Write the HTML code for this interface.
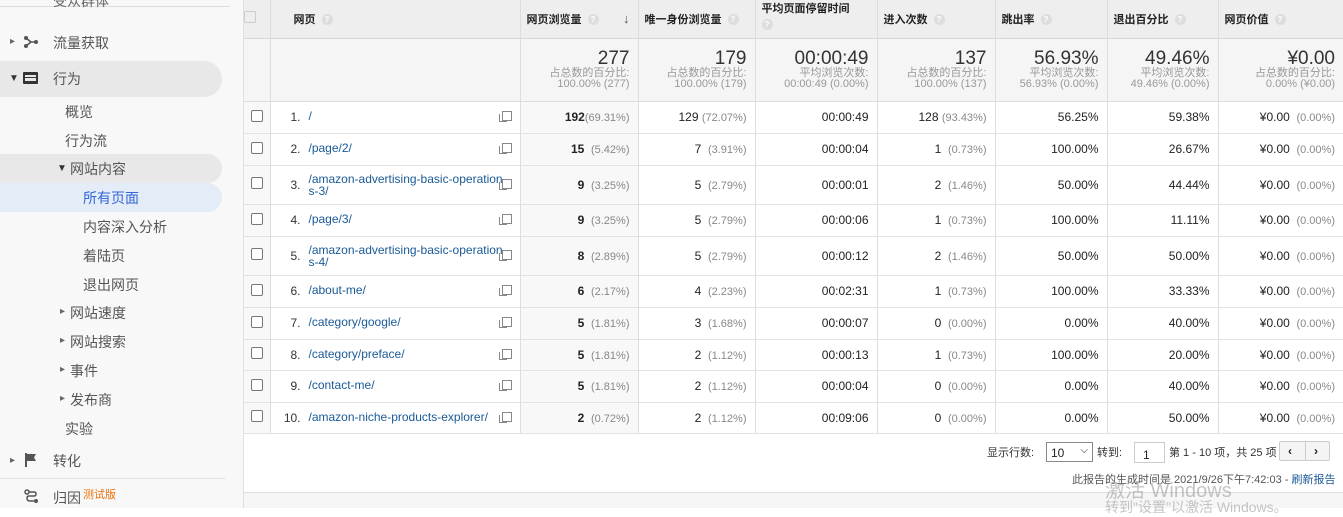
<!DOCTYPE html>
<html><head><meta charset="utf-8">
<style>
*{margin:0;padding:0;box-sizing:border-box}
body{width:1343px;height:508px;overflow:hidden;background:#fff;font-family:"Liberation Sans","Noto Sans CJK SC",sans-serif;font-size:12px;color:#222;position:relative}
#side{position:absolute;left:0;top:0;width:244px;height:508px;background:#f8f8f8;color:#444}
.it{position:absolute;font-size:14px;color:#555}
.ar{position:absolute;font-size:10px;color:#666}
.pill{position:absolute;background:#e8e8e8;border-radius:0 20px 20px 0}
table{position:absolute;left:244px;top:0;width:1099px;border-collapse:collapse;table-layout:fixed}
td{border-right:1px solid #ddd;border-bottom:1px solid #e2e2e2;padding:0 8px;text-align:right;vertical-align:middle;white-space:nowrap}
td:last-child{border-right:none}
tr.h td{background:#eee;height:38px;font-weight:bold;font-size:11px;text-align:left;color:#222;border-bottom:1px solid #d6d6d6;vertical-align:middle}
tr.t td{background:#f5f5f5;height:63px;color:#999;font-size:11px;line-height:11px;border-bottom:1px solid #ddd}
tr.t b{display:block;font-weight:normal;font-size:19px;line-height:19px;color:#333}
td.c{background:#f8f8f8;padding:0;text-align:center}
td.s{background:#f8f8f8}
.cb{display:inline-block;width:12px;height:12px;border:1px solid #777;border-radius:2px;background:#fff}
td.p{text-align:left;padding:0 8px 0 0;position:relative;white-space:normal}
.n{display:inline-block;width:38px;text-align:right;padding-right:8px;color:#333;vertical-align:top}
.l{color:#1a5a96;display:inline-block;width:196px;vertical-align:top;line-height:12px;word-break:break-all}
.ic{position:absolute;right:8px;top:50%;margin-top:-6px;width:10px;height:10px;border:1px solid #888;background:#fff}
.ic:before{content:"";position:absolute;left:-4px;top:2px;width:7px;height:7px;border-left:1px solid #888;border-bottom:1px solid #888}
.g{color:#888;font-size:11px}
.q{display:inline-block;width:11px;height:11px;border-radius:50%;background:#ddd;color:#fff;font-size:8px;text-align:center;line-height:11px;margin-left:6px;vertical-align:middle}
</style></head><body>
<div id="side">
<div style="position:absolute;left:0;top:0;width:230px;height:7px;border-bottom:1px solid #ddd"></div>
<div class="it" style="left:53px;top:-9px;color:#666">受众群体</div>
<div class="ar" style="left:10px;top:36px">▸</div>
<svg style="position:absolute;left:24px;top:35px" width="14" height="14"><circle cx="2" cy="3" r="2" fill="#555"/><circle cx="2" cy="11" r="2" fill="#555"/><circle cx="12" cy="7" r="2" fill="#555"/><path d="M2 3 L7 7 L2 11 M7 7 H12" stroke="#555" stroke-width="1.6" fill="none"/></svg>
<div class="it" style="left:53px;top:33px">流量获取</div>
<div class="pill" style="left:0;top:61px;width:222px;height:36px"></div>
<div class="ar" style="left:9px;top:73px;color:#333">▼</div>
<div style="position:absolute;left:23px;top:72px;width:15px;height:12px;background:#333;border-radius:1px"><div style="position:absolute;left:2px;top:3px;width:11px;height:6px;background:#e8e8e8"></div><div style="position:absolute;left:2px;top:5px;width:11px;height:1px;background:#333"></div></div>
<div class="it" style="left:53px;top:69px">行为</div>
<div class="it" style="left:65px;top:102px">概览</div>
<div class="it" style="left:65px;top:131px">行为流</div>
<div class="pill" style="left:0;top:154px;width:222px;height:29px"></div>
<div class="ar" style="left:57px;top:163px;color:#333">▼</div>
<div class="it" style="left:70px;top:159px">网站内容</div>
<div class="pill" style="left:0;top:183px;width:222px;height:29px;background:#e4ecf8"></div>
<div class="it" style="left:83px;top:188px;color:#3367d6">所有页面</div>
<div class="it" style="left:83px;top:217px">内容深入分析</div>
<div class="it" style="left:83px;top:246px">着陆页</div>
<div class="it" style="left:83px;top:275px">退出网页</div>
<div class="ar" style="left:60px;top:306px">▸</div><div class="it" style="left:70px;top:303px">网站速度</div>
<div class="ar" style="left:60px;top:335px">▸</div><div class="it" style="left:70px;top:332px">网站搜索</div>
<div class="ar" style="left:60px;top:364px">▸</div><div class="it" style="left:70px;top:361px">事件</div>
<div class="ar" style="left:60px;top:393px">▸</div><div class="it" style="left:70px;top:390px">发布商</div>
<div class="it" style="left:65px;top:419px">实验</div>
<div class="ar" style="left:10px;top:455px">▸</div>
<svg style="position:absolute;left:25px;top:453px" width="12" height="14"><path d="M1 0 V14" stroke="#555" stroke-width="2"/><path d="M2 1 H11 L9 4.5 L11 8 H2Z" fill="#555"/></svg>
<div class="it" style="left:53px;top:451px">转化</div>
<div style="position:absolute;left:0;top:478px;width:225px;height:1px;background:#e0e0e0"></div>
<svg style="position:absolute;left:24px;top:489px" width="16" height="16"><circle cx="3" cy="3" r="2" fill="none" stroke="#555" stroke-width="1.5"/><circle cx="12" cy="12" r="2" fill="#555"/><path d="M5 3 H10 Q12 3 12 5 Q12 7 10 7 H5 Q3 7 3 9 Q3 12 6 12 H10" stroke="#555" stroke-width="1.5" fill="none"/></svg>
<div class="it" style="left:53px;top:488px">归因</div>
<div class="it" style="left:83px;top:486px;font-size:11px;color:#e8710a">测试版</div>
</div>
<div style="position:absolute;left:243px;top:0;width:1px;height:508px;background:#e0e0e0"></div>

<table>
<colgroup><col style="width:26px"><col style="width:250px"><col style="width:118px"><col style="width:117px"><col style="width:122px"><col style="width:118px"><col style="width:112px"><col style="width:111px"><col style="width:125px"></colgroup>
<tr class="h"><td class="c" style="background:#eee"><span class="cb" style="border-color:#ccc;background:#eee"></span></td><td style="padding-left:23px">网页<span class="q">?</span></td><td style="padding-left:6px">网页浏览量<span class="q">?</span><span style="float:right;font-size:13px;color:#555">↓</span></td><td style="padding-left:6px">唯一身份浏览量<span class="q">?</span></td><td style="padding-left:6px;vertical-align:top;padding-top:2px;line-height:15px">平均页面停留时间<br><span class="q" style="margin-left:0">?</span></td><td style="padding-left:6px">进入次数<span class="q">?</span></td><td style="padding-left:6px">跳出率<span class="q">?</span></td><td style="padding-left:6px">退出百分比<span class="q">?</span></td><td style="padding-left:6px">网页价值<span class="q">?</span></td></tr>
<tr class="t"><td class="c" style="background:#f5f5f5"></td><td></td><td><b>277</b>占总数的百分比:<br>100.00% (277)</td><td><b>179</b>占总数的百分比:<br>100.00% (179)</td><td><b>00:00:49</b>平均浏览次数:<br>00:00:49 (0.00%)</td><td><b>137</b>占总数的百分比:<br>100.00% (137)</td><td><b>56.93%</b>平均浏览次数:<br>56.93% (0.00%)</td><td><b>49.46%</b>平均浏览次数:<br>49.46% (0.00%)</td><td><b>¥0.00</b>占总数的百分比:<br>0.00% (¥0.00)</td></tr>
<tr style="height:32px"><td class="c"><span class="cb"></span></td><td class="p"><span class="n">1.</span><span class="l">/</span><i class="ic"></i></td><td class="s"><b>192</b><span class="g">(69.31%)</span></td><td>129 <span class="g">(72.07%)</span></td><td>00:00:49</td><td>128 <span class="g">(93.43%)</span></td><td>56.25%</td><td>59.38%</td><td>¥0.00 &nbsp;<span class="g">(0.00%)</span></td></tr>
<tr style="height:32px"><td class="c"><span class="cb"></span></td><td class="p"><span class="n">2.</span><span class="l">/page/2/</span><i class="ic"></i></td><td class="s"><b>15</b> &nbsp;<span class="g">(5.42%)</span></td><td>7 &nbsp;<span class="g">(3.91%)</span></td><td>00:00:04</td><td>1 &nbsp;<span class="g">(0.73%)</span></td><td>100.00%</td><td>26.67%</td><td>¥0.00 &nbsp;<span class="g">(0.00%)</span></td></tr>
<tr style="height:39px"><td class="c"><span class="cb"></span></td><td class="p"><span class="n" style="vertical-align:middle">3.</span><span class="l" style="vertical-align:middle">/amazon-advertising-basic-operations-3/</span><i class="ic"></i></td><td class="s"><b>9</b> &nbsp;<span class="g">(3.25%)</span></td><td>5 &nbsp;<span class="g">(2.79%)</span></td><td>00:00:01</td><td>2 &nbsp;<span class="g">(1.46%)</span></td><td>50.00%</td><td>44.44%</td><td>¥0.00 &nbsp;<span class="g">(0.00%)</span></td></tr>
<tr style="height:32px"><td class="c"><span class="cb"></span></td><td class="p"><span class="n">4.</span><span class="l">/page/3/</span><i class="ic"></i></td><td class="s"><b>9</b> &nbsp;<span class="g">(3.25%)</span></td><td>5 &nbsp;<span class="g">(2.79%)</span></td><td>00:00:06</td><td>1 &nbsp;<span class="g">(0.73%)</span></td><td>100.00%</td><td>11.11%</td><td>¥0.00 &nbsp;<span class="g">(0.00%)</span></td></tr>
<tr style="height:39px"><td class="c"><span class="cb"></span></td><td class="p"><span class="n" style="vertical-align:middle">5.</span><span class="l" style="vertical-align:middle">/amazon-advertising-basic-operations-4/</span><i class="ic"></i></td><td class="s"><b>8</b> &nbsp;<span class="g">(2.89%)</span></td><td>5 &nbsp;<span class="g">(2.79%)</span></td><td>00:00:12</td><td>2 &nbsp;<span class="g">(1.46%)</span></td><td>50.00%</td><td>50.00%</td><td>¥0.00 &nbsp;<span class="g">(0.00%)</span></td></tr>
<tr style="height:32px"><td class="c"><span class="cb"></span></td><td class="p"><span class="n">6.</span><span class="l">/about-me/</span><i class="ic"></i></td><td class="s"><b>6</b> &nbsp;<span class="g">(2.17%)</span></td><td>4 &nbsp;<span class="g">(2.23%)</span></td><td>00:02:31</td><td>1 &nbsp;<span class="g">(0.73%)</span></td><td>100.00%</td><td>33.33%</td><td>¥0.00 &nbsp;<span class="g">(0.00%)</span></td></tr>
<tr style="height:32px"><td class="c"><span class="cb"></span></td><td class="p"><span class="n">7.</span><span class="l">/category/google/</span><i class="ic"></i></td><td class="s"><b>5</b> &nbsp;<span class="g">(1.81%)</span></td><td>3 &nbsp;<span class="g">(1.68%)</span></td><td>00:00:07</td><td>0 &nbsp;<span class="g">(0.00%)</span></td><td>0.00%</td><td>40.00%</td><td>¥0.00 &nbsp;<span class="g">(0.00%)</span></td></tr>
<tr style="height:31px"><td class="c"><span class="cb"></span></td><td class="p"><span class="n">8.</span><span class="l">/category/preface/</span><i class="ic"></i></td><td class="s"><b>5</b> &nbsp;<span class="g">(1.81%)</span></td><td>2 &nbsp;<span class="g">(1.12%)</span></td><td>00:00:13</td><td>1 &nbsp;<span class="g">(0.73%)</span></td><td>100.00%</td><td>20.00%</td><td>¥0.00 &nbsp;<span class="g">(0.00%)</span></td></tr>
<tr style="height:32px"><td class="c"><span class="cb"></span></td><td class="p"><span class="n">9.</span><span class="l">/contact-me/</span><i class="ic"></i></td><td class="s"><b>5</b> &nbsp;<span class="g">(1.81%)</span></td><td>2 &nbsp;<span class="g">(1.12%)</span></td><td>00:00:04</td><td>0 &nbsp;<span class="g">(0.00%)</span></td><td>0.00%</td><td>40.00%</td><td>¥0.00 &nbsp;<span class="g">(0.00%)</span></td></tr>
<tr style="height:31px"><td class="c"><span class="cb"></span></td><td class="p"><span class="n">10.</span><span class="l">/amazon-niche-products-explorer/</span><i class="ic"></i></td><td class="s"><b>2</b> &nbsp;<span class="g">(0.72%)</span></td><td>2 &nbsp;<span class="g">(1.12%)</span></td><td>00:09:06</td><td>0 &nbsp;<span class="g">(0.00%)</span></td><td>0.00%</td><td>50.00%</td><td>¥0.00 &nbsp;<span class="g">(0.00%)</span></td></tr>
</table>

<div style="position:absolute;left:987px;top:444px;font-size:11px;color:#333">显示行数:</div>
<div style="position:absolute;left:1046px;top:442px;width:47px;height:20px;border:1px solid #888;font-size:12px;padding:3px 0 0 4px;color:#222">10<span style="position:absolute;right:4px;top:2px;font-size:10px">&#x2335;</span></div>
<div style="position:absolute;left:1097px;top:444px;font-size:11px;color:#333">转到:</div>
<div style="position:absolute;left:1134px;top:442px;width:31px;height:21px;border:1px solid #ccc;font-size:12px;padding:5px 0 0 8px">1</div>
<div style="position:absolute;left:1169px;top:444px;font-size:11px;color:#333">第 1 - 10 项，共 25 项</div>
<div style="position:absolute;left:1279px;top:441px;width:51px;height:20px;border:1px solid #ccc;background:#f4f4f4;border-radius:2px"><span style="position:absolute;left:8px;top:2px;font-weight:bold;font-size:12px">&lsaquo;</span><span style="position:absolute;left:25px;top:0;width:1px;height:18px;background:#ccc"></span><span style="position:absolute;left:34px;top:2px;font-weight:bold;font-size:12px">&rsaquo;</span></div>
<div style="position:absolute;left:1072px;top:471px;font-size:11px;color:#555">此报告的生成时间是 2021/9/26下午7:42:03 - <span style="color:#1a5a96">刷新报告</span></div>
<div style="position:absolute;left:244px;top:492px;width:1099px;height:16px;background:#f6f6f6;border-top:1px solid #ddd"></div>
<div style="position:absolute;left:1105px;top:474px;font-size:20px;color:rgba(150,150,150,.55)">激活 Windows</div>
<div style="position:absolute;left:1105px;top:497px;font-size:14px;color:rgba(150,150,150,.55)">转到"设置"以激活 Windows。</div>
</body></html>
